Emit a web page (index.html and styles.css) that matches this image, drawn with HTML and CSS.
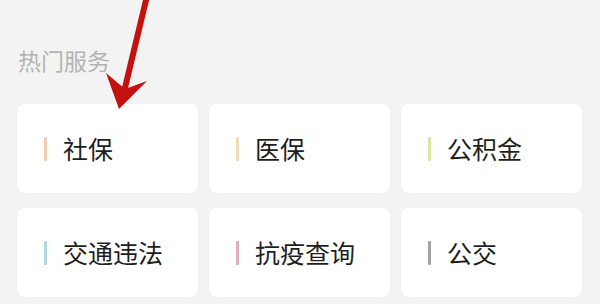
FILE: index.html
```html
<!DOCTYPE html>
<html lang="zh">
<head>
<meta charset="utf-8">
<link rel="stylesheet" href="styles.css">
</head>
<body>
<div class="page">
  <h2 class="title">热门服务</h2>
  <div class="grid">
    <div class="card"><span class="bar c1"></span><span class="label">社保</span></div>
    <div class="card"><span class="bar c2"></span><span class="label">医保</span></div>
    <div class="card"><span class="bar c3"></span><span class="label">公积金</span></div>
    <div class="card"><span class="bar c4"></span><span class="label">交通违法</span></div>
    <div class="card"><span class="bar c5"></span><span class="label">抗疫查询</span></div>
    <div class="card"><span class="bar c6"></span><span class="label">公交</span></div>
  </div>
  <svg class="arrow" width="600" height="120" viewBox="0 0 600 120">
    <line x1="147" y1="-4" x2="124" y2="92" stroke="#c3120f" stroke-width="6" stroke-linecap="round"/>
    <polygon points="119,109 106,73 125,89 147,81" fill="#c3120f"/>
  </svg>
</div>
</body>
</html>
```
FILE: styles.css
```css
html, body {
  margin: 0;
  padding: 0;
  background: #f3f3f3;
  width: 600px;
  height: 304px;
  overflow: hidden;
}
.page {
  position: relative;
  padding: 49px 18px 0 17px;
  font-family: "Noto Sans CJK SC", "Noto Sans", sans-serif;
}
.title {
  margin: 0 0 32px 1px;
  font-size: 23px;
  line-height: 23px;
  font-weight: 400;
  color: #b3b3b3;
}
.grid {
  display: grid;
  grid-template-columns: repeat(3, 181px);
  column-gap: 11px;
  row-gap: 15px;
}
.card {
  background: #fff;
  border-radius: 8px;
  height: 89px;
  display: flex;
  align-items: center;
  padding-left: 27px;
  box-shadow: 0 0 2px rgba(0,0,0,0.03);
}
.bar {
  width: 3px;
  height: 24px;
  border-radius: 1px;
  margin-right: 16px;
}
.c1 { background: #f1cdb6; }
.c2 { background: #ecdcb8; }
.c3 { background: #dbe6a0; }
.c4 { background: #acd9dd; }
.c5 { background: #e4adbb; }
.c6 { background: #a3a3a3; }
.label {
  font-size: 25px;
  line-height: 25px;
  color: #1e1e1e;
}
.arrow {
  position: absolute;
  left: 0;
  top: 0;
  pointer-events: none;
}
```
